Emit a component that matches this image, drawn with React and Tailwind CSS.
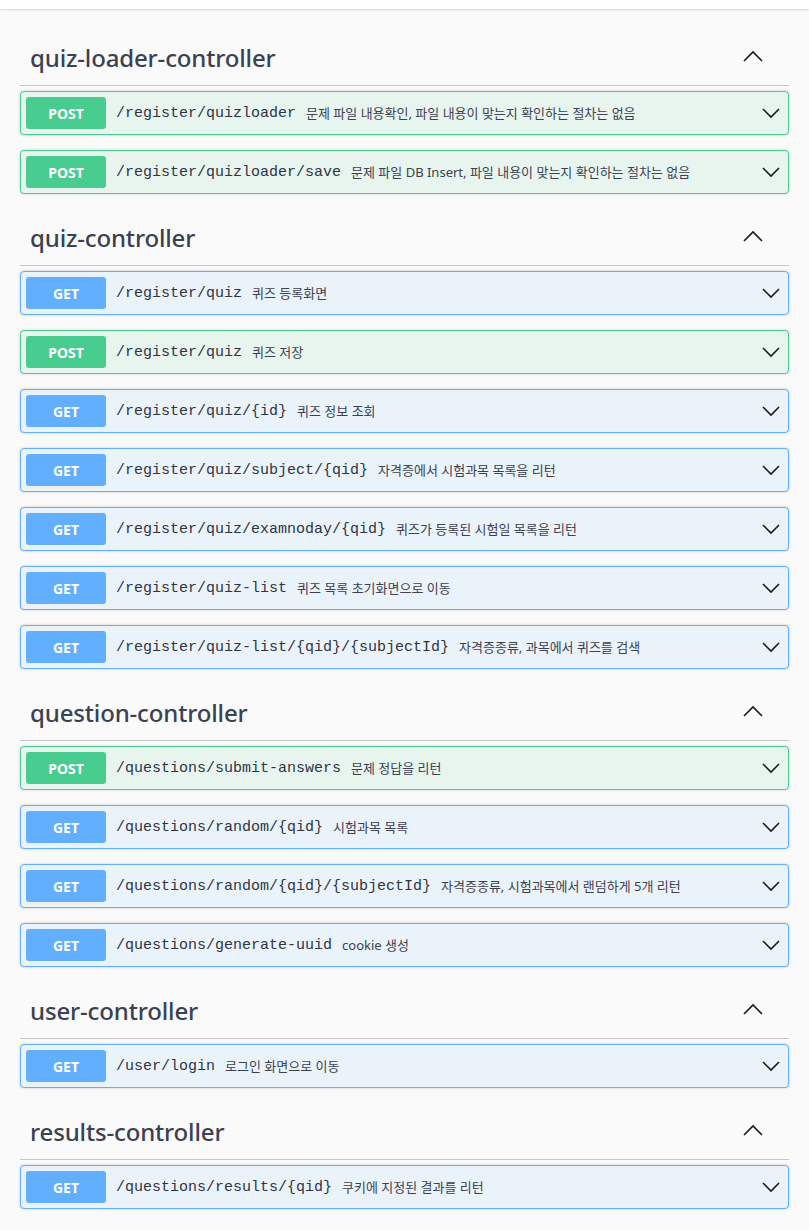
import React from "react";

const sections = [
  {
    name: "quiz-loader-controller",
    ops: [
      ["POST", "/register/quizloader", "문제 파일 내용확인, 파일 내용이 맞는지 확인하는 절차는 없음"],
      ["POST", "/register/quizloader/save", "문제 파일 DB Insert, 파일 내용이 맞는지 확인하는 절차는 없음"],
    ],
  },
  {
    name: "quiz-controller",
    ops: [
      ["GET", "/register/quiz", "퀴즈 등록화면"],
      ["POST", "/register/quiz", "퀴즈 저장"],
      ["GET", "/register/quiz/{id}", "퀴즈 정보 조회"],
      ["GET", "/register/quiz/subject/{qid}", "자격증에서 시험과목 목록을 리턴"],
      ["GET", "/register/quiz/examnoday/{qid}", "퀴즈가 등록된 시험일 목록을 리턴"],
      ["GET", "/register/quiz-list", "퀴즈 목록 초기화면으로 이동"],
      ["GET", "/register/quiz-list/{qid}/{subjectId}", "자격증종류, 과목에서 퀴즈를 검색"],
    ],
  },
  {
    name: "question-controller",
    ops: [
      ["POST", "/questions/submit-answers", "문제 정답을 리턴"],
      ["GET", "/questions/random/{qid}", "시험과목 목록"],
      ["GET", "/questions/random/{qid}/{subjectId}", "자격증종류, 시험과목에서 랜덤하게 5개 리턴"],
      ["GET", "/questions/generate-uuid", "cookie 생성"],
    ],
  },
  {
    name: "user-controller",
    ops: [["GET", "/user/login", "로그인 화면으로 이동"]],
  },
  {
    name: "results-controller",
    ops: [["GET", "/questions/results/{qid}", "쿠키에 지정된 결과를 리턴"]],
  },
];

const sans = { fontFamily: '"Noto Sans", "Noto Sans CJK KR", sans-serif' };

function ChevronDown() {
  return (
    <svg width="20" height="20" viewBox="0 0 20 20" className="ml-auto mr-[2px] shrink-0">
      <polyline points="2,6 10,14 18,6" fill="none" stroke="#1b1b1b" strokeWidth="1.6" />
    </svg>
  );
}

function ChevronUp() {
  return (
    <svg width="20" height="20" viewBox="0 0 20 20" className="ml-auto shrink-0">
      <polyline points="1,14 10,5 19,14" fill="none" stroke="#1b1b1b" strokeWidth="1.6" />
    </svg>
  );
}

function Op({ method, path, desc }) {
  const isPost = method === "POST";
  return (
    <div
      className={
        isPost
          ? "mb-[15px] flex h-[44px] items-center rounded-[4px] border border-[#49cc90] bg-[#e8f5ef] p-[5px] shadow-[0_0_3px_rgba(0,0,0,0.19)]"
          : "mb-[15px] flex h-[44px] items-center rounded-[4px] border border-[#61affe] bg-[#ebf3fa] p-[5px] shadow-[0_0_3px_rgba(0,0,0,0.19)]"
      }
    >
      <div
        className={
          isPost
            ? "flex h-[32px] w-[80px] shrink-0 items-center justify-center rounded-[3px] bg-[#49cc90] text-[14px] font-bold text-white"
            : "flex h-[32px] w-[80px] shrink-0 items-center justify-center rounded-[3px] bg-[#61affe] text-[14px] font-bold text-white"
        }
        style={sans}
      >
        {method}
      </div>
      <span
        className="pl-[10px] pr-[10px] pt-[3px] text-[15px] text-[#2f3445]"
        style={{ fontFamily: '"Liberation Mono", "DejaVu Sans Mono", monospace' }}
      >
        {path}
      </span>
      <span className="pt-[1px] text-[13px] text-[#3b4151]" style={sans}>
        {desc}
      </span>
      <ChevronDown />
    </div>
  );
}

export default function App() {
  return (
    <div className="min-h-screen bg-[#fafafa]">
      <div className="h-[9px] bg-white shadow-[0_1px_2px_rgba(0,0,0,0.15)]" />
      <div className="px-5 pt-5">
        {sections.map((s) => (
          <div key={s.name}>
            <div className="mb-[5px] flex h-[57px] items-center border-b border-[#c4c5c9] pl-[10px] pr-[26px]">
              <h3
                className="pt-[2px] text-[24px] font-medium leading-none tracking-[-0.15px] text-[#3b4151]"
                style={sans}
              >
                {s.name}
              </h3>
              <ChevronUp />
            </div>
            {s.ops.map(([m, p, d]) => (
              <Op key={m + p} method={m} path={p} desc={d} />
            ))}
          </div>
        ))}
      </div>
    </div>
  );
}
